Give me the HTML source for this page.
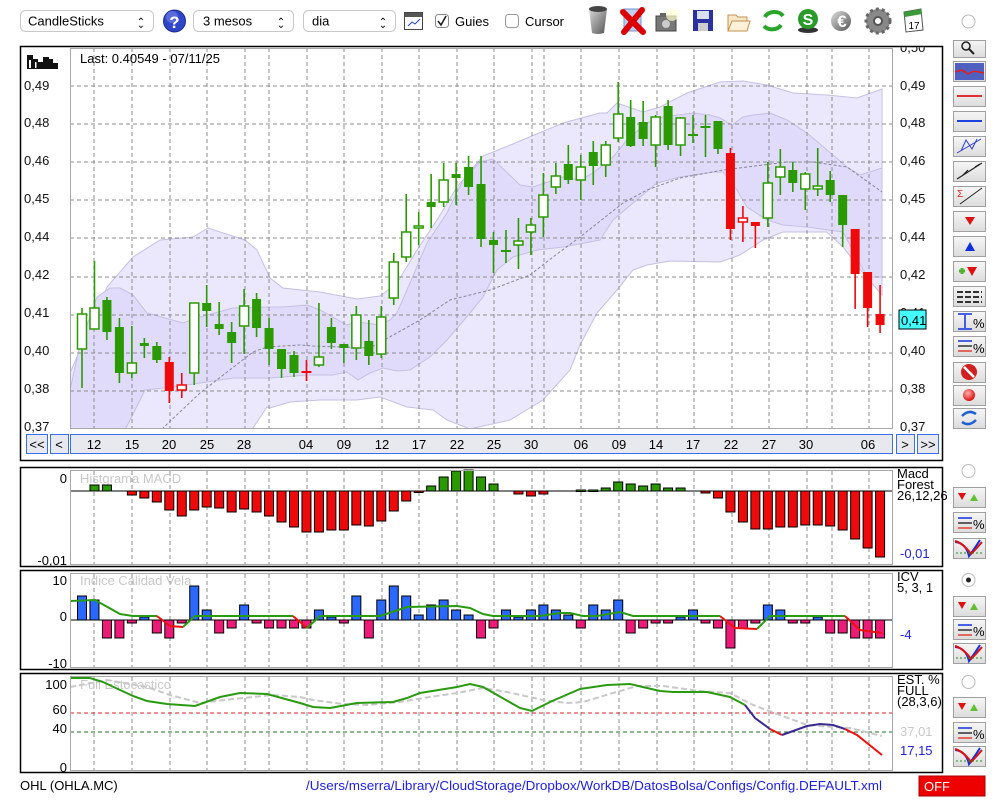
<!DOCTYPE html>
<html><head><meta charset="utf-8">
<style>
html,body{margin:0;padding:0;background:#fff;width:1000px;height:800px;overflow:hidden;font-family:"Liberation Sans",sans-serif;}
svg{position:absolute;left:0;top:0;}
text{font-family:"Liberation Sans",sans-serif;}
</style></head>
<body>
<svg id="s" width="1000" height="800" viewBox="0 0 1000 800" xmlns="http://www.w3.org/2000/svg">
<defs>
<linearGradient id="btn" x1="0" y1="0" x2="0" y2="1"><stop offset="0" stop-color="#f6f6f6"/><stop offset="1" stop-color="#dcdcdc"/></linearGradient>
<linearGradient id="gr" x1="0" y1="0" x2="1" y2="1"><stop offset="0" stop-color="#ddd"/><stop offset="1" stop-color="#555"/></linearGradient>
<radialGradient id="rb" cx="0.4" cy="0.35" r="0.7"><stop offset="0" stop-color="#ffb0b0"/><stop offset="1" stop-color="#dd0000"/></radialGradient>
<clipPath id="mc"><rect x="70" y="48" width="823" height="380"/></clipPath>
<clipPath id="tc"><rect x="895" y="47.5" width="45" height="20"/></clipPath>
</defs>

<!-- TOOLBAR -->
<g font-size="13">
<rect x="20.5" y="10.5" width="133" height="21" rx="5" fill="#fff" stroke="#c8c8c8"/>
<text x="28" y="25.5">CandleSticks</text>
<text x="141" y="25" font-size="10" text-anchor="middle">&#8963;</text><text x="141" y="28" font-size="10" text-anchor="middle">&#8964;</text>
<circle cx="174.5" cy="21" r="11" fill="#3046c8" stroke="#1a2a90"/><circle cx="172" cy="17" r="6" fill="#8090e8" opacity="0.5"/>
<text x="174.5" y="28" font-size="17" font-weight="bold" fill="#fff" text-anchor="middle">?</text>
<rect x="193.5" y="10.5" width="100" height="21" rx="5" fill="#fff" stroke="#c8c8c8"/>
<text x="203" y="25.5">3 mesos</text>
<text x="281" y="25" font-size="10" text-anchor="middle">&#8963;</text><text x="281" y="28" font-size="10" text-anchor="middle">&#8964;</text>
<rect x="303.5" y="10.5" width="92" height="21" rx="5" fill="#fff" stroke="#c8c8c8"/>
<text x="312" y="25.5">dia</text>
<text x="383" y="25" font-size="10" text-anchor="middle">&#8963;</text><text x="383" y="28" font-size="10" text-anchor="middle">&#8964;</text>
<rect x="404.5" y="12.5" width="18" height="17" fill="#fff" stroke="#444"/><rect x="405" y="13" width="17" height="4" fill="#555"/>
<path d="M408 26 L412 22 L415 24 L420 19" stroke="#2040d0" fill="none"/>
<rect x="435.5" y="14.5" width="13" height="13" rx="3" fill="#fff" stroke="#888"/>
<path d="M438 21 L441 25 L446 16" stroke="#222" stroke-width="1.6" fill="none"/>
<text x="455" y="26">Guies</text>
<rect x="505.5" y="14.5" width="13" height="13" rx="3" fill="#fff" stroke="#999"/>
<text x="525" y="26">Cursor</text>
</g>
<!-- icons -->
<path d="M589 9 Q598 5 607 9 L604 33 Q598 35 592 33 Z" fill="url(#gr)"/><ellipse cx="598" cy="9" rx="9" ry="3" fill="#444"/>
<rect x="624" y="9" width="17" height="22" fill="#bcd0f4" stroke="#7090d0"/>
<path d="M623 12 L643 32 M642 10 L624 32" stroke="#dd0000" stroke-width="6" stroke-linecap="round"/>
<rect x="656" y="16" width="20" height="15" fill="#777" stroke="#444"/><rect x="660" y="13" width="6" height="4" fill="#666"/>
<circle cx="666" cy="24" r="4" fill="#ccc"/><circle cx="672" cy="15" r="6" fill="#ffffd0" opacity="0.7"/>
<rect x="693" y="10" width="20" height="21" fill="#2a30a0"/><rect x="697" y="11" width="12" height="8" fill="#d8e0f0"/><rect x="698" y="23" width="10" height="8" fill="#ccc"/>
<path d="M728 15 L736 15 L738 17 L747 17 L747 31 L728 31 Z" fill="#f8e8c8" stroke="#c09050"/><path d="M728 31 L732 21 L750 21 L747 31 Z" fill="#fbf0d8" stroke="#c09050"/>
<path d="M765 17 A10 8 0 0 1 783 16" stroke="#2aa52a" stroke-width="4" fill="none"/><path d="M781 25 A10 8 0 0 1 764 26" stroke="#2aa52a" stroke-width="4" fill="none"/>
<ellipse cx="808" cy="30" rx="10" ry="3" fill="#333"/><circle cx="808" cy="19" r="10" fill="#2a9a2a"/><text x="808" y="25" font-size="16" font-weight="bold" fill="#fff" text-anchor="middle">S</text>
<circle cx="841" cy="21" r="10" fill="url(#gr)"/><text x="842" y="27" font-size="17" font-weight="bold" fill="#fff" text-anchor="middle">&#8364;</text>
<circle cx="878" cy="21" r="12" fill="#888" stroke="#666" stroke-width="3" stroke-dasharray="3 3"/><circle cx="878" cy="21" r="4" fill="#fff" stroke="#555" stroke-width="2"/>
<path d="M904 12 L921 9 L923 30 L906 32 Z" fill="#fff" stroke="#555"/><path d="M904 12 L921 9 L922 14 L905 17 Z" fill="#3a9a3a"/>
<text x="914" y="29" font-size="10" text-anchor="middle">17</text>
<circle cx="968.5" cy="21.5" r="6.5" fill="#fff" stroke="#bbb"/>

<!-- MAIN PANEL -->
<rect x="20.5" y="46.5" width="922" height="414" fill="#fff" stroke="#000" stroke-width="1.5"/>
<g clip-path="url(#mc)">
<polygon fill="#ebe8fd" stroke="#c6bfe4" points="70,373 107,287 133,257 160,240 193,237 208,228 245,240 257,250 270,278 283,288 320,292 357,299 380,296 397,283 417,250 437,220 457,187 483,156 503,148 563,123 600,113 607,113 617,103 643,112 660,107 687,93 720,82 743,81 767,85 793,93 827,95 857,98 882,89 882,295 863,273 843,247 827,232 783,232 763,240 740,255 720,262 670,261 647,265 633,270 617,290 597,313 580,345 570,370 543,400 510,420 470,429 447,420 433,410 407,407 380,397 357,400 320,400 290,402 270,408 267,407 245,440 70,440"/>
<polygon fill="#e1dbfb" stroke="#c6bfe4" points="70,440 70,390 80,345 97,297 110,288 120,288 133,295 147,313 183,323 200,317 233,308 270,307 283,307 307,305 320,310 347,325 357,322 380,325 390,320 397,313 410,283 427,243 447,213 463,180 480,162 493,159 520,185 533,187 563,177 580,180 593,173 613,157 627,140 647,123 663,117 693,113 710,115 720,118 732,125 743,117 753,115 770,113 787,120 807,133 827,150 847,167 860,175 882,168 882,277 867,277 843,232 807,227 783,225 767,220 747,207 737,190 723,172 713,172 680,177 657,183 633,203 613,220 600,240 563,247 537,250 513,257 497,270 483,297 470,313 447,340 430,357 410,370 397,371 383,368 370,373 358,380 347,372 333,375 307,375 270,378 233,378 200,383 173,387 145,390 120,440"/>
<polyline fill="none" stroke="#8a849a" stroke-width="1" stroke-dasharray="3 2" points="133,457 163,428 200,393 253,352 267,347 300,345 313,346 370,348 420,320 450,300 490,290 530,275 553,257 580,237 623,203 647,190 680,178 723,170 787,162 813,162 847,167 882,192"/>
<g id="grid" stroke="#8c8c8c" stroke-width="1" stroke-dasharray="4 3"></g>
<g id="candles"></g>
</g>
<rect x="70.5" y="48.5" width="822" height="380" fill="none" stroke="#a8a8a8"/>
<!-- logo bars -->
<g fill="#111"><rect x="27" y="55" width="6" height="14"/><rect x="33" y="59" width="5" height="10"/><rect x="38" y="62" width="5" height="7"/><rect x="43" y="57" width="6" height="12"/><rect x="49" y="59" width="4" height="10"/><rect x="53" y="63" width="5" height="6"/></g>
<rect x="29" y="60" width="2" height="8" fill="#fff"/><rect x="35" y="62" width="1.5" height="6" fill="#fff"/>
<text x="80" y="63" font-size="13">Last: 0.40549 - 07/11/25</text>
<g font-size="13" fill="#111">
<text x="24" y="90">0,49</text><text x="24" y="127">0,48</text><text x="24" y="165">0,46</text><text x="24" y="203">0,45</text><text x="24" y="241">0,44</text><text x="24" y="279">0,42</text><text x="24" y="317">0,41</text><text x="24" y="355">0,40</text><text x="24" y="393">0,38</text><text x="24" y="431">0,37</text>
<text x="900" y="52" clip-path="url(#tc)">0,50</text><text x="900" y="90">0,49</text><text x="900" y="127">0,48</text><text x="900" y="165">0,46</text><text x="900" y="203">0,45</text><text x="900" y="241">0,44</text><text x="900" y="279">0,42</text><text x="900" y="317">0,41</text><text x="900" y="355">0,40</text><text x="900" y="393">0,38</text><text x="900" y="431">0,37</text>
</g>
<rect x="899" y="310" width="27" height="19" fill="#44ffff" stroke="#000"/>
<text x="901" y="325" font-size="13">0,41</text>
<!-- nav row -->
<g fill="#e8e9ee" stroke="#3a6ef0" stroke-width="1">
<rect x="26.5" y="434.5" width="21" height="19"/><rect x="50.5" y="434.5" width="18" height="19"/>
<rect x="70.5" y="434.5" width="822" height="19"/>
<rect x="896.5" y="434.5" width="18" height="19"/><rect x="917.5" y="434.5" width="21" height="19"/>
</g>
<g font-size="13" text-anchor="middle">
<text x="37" y="449">&lt;&lt;</text><text x="59" y="449">&lt;</text><text x="905" y="449">&gt;</text><text x="928" y="449">&gt;&gt;</text>
<text x="94" y="449">12</text><text x="132" y="449">15</text><text x="169" y="449">20</text><text x="207" y="449">25</text><text x="244" y="449">28</text><text x="306" y="449">04</text><text x="344" y="449">09</text><text x="382" y="449">12</text><text x="419" y="449">17</text><text x="457" y="449">22</text><text x="494" y="449">25</text><text x="531" y="449">30</text><text x="581" y="449">06</text><text x="619" y="449">09</text><text x="656" y="449">14</text><text x="693" y="449">17</text><text x="731" y="449">22</text><text x="769" y="449">27</text><text x="806" y="449">30</text><text x="868" y="449">06</text>
</g>

<!-- SUB PANELS frames -->
<g fill="#fff" stroke="#000" stroke-width="1.5">
<rect x="20.5" y="467.5" width="922" height="99"/>
<rect x="20.5" y="570.5" width="922" height="99"/>
<rect x="20.5" y="673.5" width="922" height="99"/>
</g>
<g id="subgrid" stroke="#8c8c8c" stroke-dasharray="4 3"></g>
<g font-size="13" fill="#c8c8c8">
<text x="80" y="483">Histgrama MACD</text>
<text x="80" y="585">Indice Calidad Vela</text>
<text x="80" y="689">Full Estocastico</text>
</g>
<line x1="70" y1="491" x2="893" y2="491" stroke="#000"/>
<line x1="70" y1="620" x2="893" y2="620" stroke="#000"/>
<line x1="70" y1="713" x2="893" y2="713" stroke="#e02020" stroke-dasharray="4 3"/>
<line x1="70" y1="732" x2="893" y2="732" stroke="#207020" stroke-dasharray="4 3"/>
<g id="bars"></g>
<polyline fill="none" stroke="#2a9a10" stroke-width="2" points="70,601 95,600 120,614 133,616 157,616"/>
<polyline fill="none" stroke="#ee1010" stroke-width="2" points="157,616 170,626 183,627"/>
<polyline fill="none" stroke="#2a9a10" stroke-width="2" points="183,627 195,616 293,616"/>
<polyline fill="none" stroke="#ee1010" stroke-width="2" points="293,616 307,628"/>
<polyline fill="none" stroke="#2a9a10" stroke-width="2" points="307,628 320,616 380,616 407,607 457,606 470,608 483,614 493,616 540,616 560,613 570,613 583,616 597,616 620,612 633,616 720,616"/>
<polyline fill="none" stroke="#ee1010" stroke-width="2" points="720,616 735,628 757,629"/>
<polyline fill="none" stroke="#2a9a10" stroke-width="2" points="757,629 770,616 845,616"/>
<polyline fill="none" stroke="#ee1010" stroke-width="2" points="845,616 860,630 882,633"/>
<!-- stochastic -->
<polyline fill="none" stroke="#c8c8c8" stroke-width="2" stroke-dasharray="6 3" points="70,687 107,680 147,687 170,695 200,703 233,699 273,695 300,697 313,700 343,704 367,705 400,702 423,698 457,693 483,688 507,692 543,700 567,703 583,702 613,693 637,686 663,686 700,691 730,693 753,705 780,715 807,725 833,727 850,728 882,736"/>
<polyline fill="none" stroke="#2a9a10" stroke-width="2" points="70,678 90,678 103,682 133,696 147,701 167,704 195,706 220,697 240,693 267,694 300,703 313,707 330,708 357,703 393,702 407,698 420,693 457,687 470,684 483,687 520,708 532,711 550,702 580,689 607,685 630,684 660,691 673,692 707,692 730,697 745,705"/>
<polyline fill="none" stroke="#3a2a90" stroke-width="2" points="745,705 755,718 770,729"/>
<polyline fill="none" stroke="#ee1010" stroke-width="2" points="770,729 782,735"/>
<polyline fill="none" stroke="#3a2a90" stroke-width="2" points="782,735 807,726 820,724 833,725 845,729"/>
<polyline fill="none" stroke="#ee1010" stroke-width="2" points="845,729 857,735 882,755"/>
<g fill="none" stroke="#a8a8a8">
<rect x="70.5" y="470.5" width="822" height="94"/>
<rect x="70.5" y="573.5" width="822" height="94"/>
<rect x="70.5" y="676.5" width="822" height="94"/>
</g>
<g font-size="13" text-anchor="end">
<text x="67" y="483">0</text><text x="67" y="565">-0,01</text>
<text x="67" y="585">10</text><text x="67" y="621">0</text><text x="67" y="668">-10</text>
<text x="67" y="689">100</text><text x="67" y="714">60</text><text x="67" y="733">40</text><text x="67" y="772">0</text>
</g>
<g font-size="13">
<text x="897" y="478">Macd</text><text x="897" y="489">Forest</text><text x="897" y="500">26,12,26</text>
<text x="900" y="558" fill="#2020e0">-0,01</text>
<text x="897" y="581">ICV</text><text x="897" y="592">5, 3, 1</text>
<text x="900" y="639" fill="#2020e0">-4</text>
<text x="897" y="684">EST. %</text><text x="897" y="695">FULL</text><text x="897" y="706">(28,3,6)</text>
<text x="900" y="736" fill="#c8c8c8">37,01</text>
<text x="900" y="755" fill="#2020e0">17,15</text>
</g>

<!-- footer -->
<text x="20" y="790" font-size="13">OHL (OHLA.MC)</text>
<text x="306" y="790" font-size="13" fill="#2020e0" textLength="576" lengthAdjust="spacingAndGlyphs">/Users/mserra/Library/CloudStorage/Dropbox/WorkDB/DatosBolsa/Configs/Config.DEFAULT.xml</text>
<rect x="919" y="776" width="66" height="20" fill="#ee0000" stroke="#aa0000"/>
<text x="924" y="791" font-size="13" fill="#fff">OFF</text>

<g id="tools"></g>
</svg>
<script>
var NS="http://www.w3.org/2000/svg";
function el(p,t,a){var e=document.createElementNS(NS,t);for(var k in a)e.setAttribute(k,a[k]);p.appendChild(e);return e;}
function X(i){return 82+12.47*i;}
var grid=document.getElementById('grid');
var vx=[94,132,170,207,245,269,307,344,382,419,457,494,532,544,581,619,657,694,732,769,807,832,869];
[86,124,162,200,238,277,315,353,391].forEach(function(y){el(grid,'line',{x1:70,y1:y,x2:893,y2:y});});
vx.forEach(function(x){el(grid,'line',{x1:x,y1:48,x2:x,y2:428});});
var sg=document.getElementById('subgrid');
vx.forEach(function(x){[[471,564],[574,667],[677,770]].forEach(function(r){el(sg,'line',{x1:x,y1:r[0],x2:x,y2:r[1]});});});
var C=[["w",314,349,308,388],["w",308,329,261,329],["g",300,332,297,340],["g",327,373,318,383],["w",363,373,326,378],["g",343,346,338,358],["g",346,360,342,363],["r",362,391,357,403],["rw",385,390,373,398],["w",303,373,303,385],["g",303,311,285,327],["g",324,329,302,335],["g",332,343,322,363],["w",306,326,289,354],["g",299,328,293,337],["g",328,349,318,365],["g",349,369,349,378],["g",355,373,351,377],["rc",372,372,360,381],["w",357,365,303,367],["g",327,343,318,349],["g",344,348,344,363],["w",315,348,306,360],["g",341,356,320,365],["w",317,354,306,358],["w",262,298,253,305],["w",232,257,194,262],["w",226,228,212,245],["g",202,207,174,228],["w",180,202,163,207],["g",174,178,163,205],["g",167,187,156,195],["g",184,239,156,247],["g",240,245,232,273],["gc",251,251,230,263],["w",241,245,218,269],["w",225,232,218,255],["w",195,217,173,237],["w",176,187,163,194],["g",164,180,145,184],["w",167,180,155,200],["g",152,166,141,185],["w",145,165,141,177],["w",114,138,82,142],["g",117,146,100,147],["g",122,139,101,146],["w",117,145,115,167],["g",106,145,100,150],["w",118,145,117,156],["gc",135,135,115,143],["gc",127,127,115,157],["g",121,149,121,154],["r",153,229,148,240],["rw",218,222,206,242],["r",222,226,222,248],["w",183,218,162,227],["w",167,177,149,195],["g",170,183,162,192],["w",174,189,172,210],["w",186,189,148,196],["g",180,195,171,202],["g",195,225,195,247],["r",229,274,229,309],["r",272,308,272,327],["r",314,325,285,333]];
var cg=document.getElementById('candles');
C.forEach(function(c,i){var x=X(i),t=c[0],red=t[0]=='r',col=red?'#ee0a0a':'#2a9a00';
el(cg,'line',{x1:x,y1:c[3],x2:x,y2:c[4],stroke:col,'stroke-width':1.6});
if(t=='rc'||t=='gc'){el(cg,'line',{x1:x-5,y1:c[1],x2:x+5,y2:c[1],stroke:col,'stroke-width':2});return;}
var h=Math.max(c[2]-c[1],2);
if(t=='w'||t=='rw')el(cg,'rect',{x:x-4.5,y:c[1],width:9,height:h,fill:'#fff',stroke:col,'stroke-width':1.5});
else el(cg,'rect',{x:x-4.5,y:c[1],width:9,height:h,fill:col});});
var M=[0,485,485,0,495,498,502,510,516,510,507,508,512,509,512,516,522,527,532,532,530,530,525,526,521,511,501,492,486,477,471,470,477,484,0,494,496,494,0,0,490,490,488,482,484,486,484,488,488,0,493,498,512,522,529,529,527,527,525,525,526,530,539,548,557];
var bg=document.getElementById('bars');
M.forEach(function(v,i){if(!v)return;var x=X(i)-4.5;var up=v<491;
el(bg,'rect',{x:x,y:up?v:491,width:9,height:Math.max(Math.abs(v-491),1.5),fill:up?'#2a9a00':'#ee0a0a',stroke:'#000','stroke-width':1});});
var I=[596,600,638,638,623,617,633,638,623,586,610,633,628,605,623,628,628,628,628,610,617,623,596,638,600,586,596,615,605,600,610,615,638,628,610,617,610,605,610,615,628,605,610,600,633,628,623,623,617,610,623,628,648,628,623,605,610,623,623,617,633,633,638,638,638];
I.forEach(function(v,i){var x=X(i)-4.5;var up=v<620;
el(bg,'rect',{x:x,y:up?v:620,width:9,height:Math.abs(v-620),fill:up?'#2a68ff':'#ee1a78',stroke:'#000','stroke-width':1});});
var tg=document.getElementById('tools');
function btn(y,h){el(tg,'rect',{x:953.5,y:y+.5,width:32,height:h||20,fill:'url(#btn)',stroke:'#a0a0a0'});}
var ys=[40,61,86,111,136,161,186,211,236,261,286,311,336,362,385,408];
ys.forEach(function(y){btn(y,y==40?17:20);});
el(tg,'circle',{cx:966,cy:46,r:4,fill:'none',stroke:'#222','stroke-width':1.5});el(tg,'line',{x1:969,y1:49,x2:974,y2:54,stroke:'#222','stroke-width':2});
el(tg,'rect',{x:955,y:63,width:29,height:17,fill:'#5060c0'});el(tg,'polyline',{points:'955,72 962,70 968,74 974,71 984,73',stroke:'#e02020',fill:'none','stroke-width':1.5});
el(tg,'line',{x1:957,y1:96,x2:982,y2:96,stroke:'#e03030','stroke-width':2});
el(tg,'line',{x1:957,y1:121,x2:982,y2:121,stroke:'#2040e0','stroke-width':2});
el(tg,'path',{d:'M957 153 L981 139 M961 151 L966 140 L972 149 L977 139',stroke:'#3040d0',fill:'none'});
el(tg,'path',{d:'M957 179 L982 163 M962 176 L968 170 M975 167 L980 164',stroke:'#222',fill:'none','stroke-width':1.2});
el(tg,'text',{x:957,y:197,'font-size':10,fill:'#e02020'}).textContent='\u03a3';
el(tg,'path',{d:'M960 204 L982 188',stroke:'#222',fill:'none'});
el(tg,'path',{d:'M965 217 L975 217 L970 225 Z',fill:'#e01010'});
el(tg,'path',{d:'M965 251 L975 251 L970 242 Z',fill:'#1030e0'});
el(tg,'path',{d:'M959 271 L965 271 M962 268 L962 274',stroke:'#50b030','stroke-width':3});el(tg,'path',{d:'M967 267 L977 267 L972 276 Z',fill:'#e01010'});
[292,297,302].forEach(function(y){el(tg,'line',{x1:957,y1:y,x2:982,y2:y,stroke:'#333','stroke-width':2,'stroke-dasharray':'6 2'});});
el(tg,'path',{d:'M958 314 L972 314 M958 329 L972 329 M965 315 L965 328',stroke:'#1030e0','stroke-width':1.5});
el(tg,'text',{x:973,y:328,'font-size':13}).textContent='%';
el(tg,'line',{x1:958,y1:341,x2:972,y2:341,stroke:'#1030e0','stroke-width':1.5});el(tg,'line',{x1:958,y1:346,x2:972,y2:346,stroke:'#333','stroke-width':1.5});el(tg,'line',{x1:958,y1:351,x2:972,y2:351,stroke:'#e04030','stroke-width':1.5});
el(tg,'text',{x:973,y:353,'font-size':13}).textContent='%';
el(tg,'circle',{cx:969,cy:372,r:8,fill:'#d02020'});el(tg,'line',{x1:964,y1:367,x2:974,y2:377,stroke:'#fff','stroke-width':2.5});
el(tg,'circle',{cx:969,cy:395,r:6,fill:'url(#rb)'});
el(tg,'path',{d:'M962 416 Q969 409 976 414 M976 420 Q969 427 962 422',stroke:'#2060d0','stroke-width':2.5,fill:'none'});
[[471,false,487,512,538],[580,true,596,619,643],[682,false,697,722,746]].forEach(function(p){
el(tg,'circle',{cx:968.5,cy:p[0],r:6.5,fill:'#fff',stroke:'#bbb'});
if(p[1])el(tg,'circle',{cx:968.5,cy:p[0],r:2.5,fill:'#222'});
btn(p[2]);el(tg,'path',{d:'M958 '+(p[2]+6)+' L966 '+(p[2]+6)+' L962 '+(p[2]+13)+' Z',fill:'#e01010'});el(tg,'path',{d:'M970 '+(p[2]+14)+' L978 '+(p[2]+14)+' L974 '+(p[2]+7)+' Z',fill:'#60c030'});
btn(p[3]);var y=p[3];el(tg,'line',{x1:958,y1:y+6,x2:972,y2:y+6,stroke:'#1030e0','stroke-width':1.5});el(tg,'line',{x1:958,y1:y+11,x2:972,y2:y+11,stroke:'#333','stroke-width':1.5});el(tg,'line',{x1:958,y1:y+16,x2:972,y2:y+16,stroke:'#e04030','stroke-width':1.5});
el(tg,'text',{x:973,y:y+17,'font-size':13}).textContent='%';
btn(p[4]);y=p[4];el(tg,'path',{d:'M955 '+(y+4)+' Q966 '+(y+5)+' 969 '+(y+18)+' Q975 '+(y+10)+' 980 '+(y+2),stroke:'#1030e0','stroke-width':2,fill:'none'});
el(tg,'path',{d:'M955 '+(y+3)+' Q963 '+(y+5)+' 971 '+(y+16)+' Q977 '+(y+10)+' 982 '+(y+4),stroke:'#e01010','stroke-width':2,fill:'none'});
el(tg,'line',{x1:956,y1:y+15,x2:984,y2:y+15,stroke:'#209020','stroke-dasharray':'2 2'});
});
</script>
</body></html>
